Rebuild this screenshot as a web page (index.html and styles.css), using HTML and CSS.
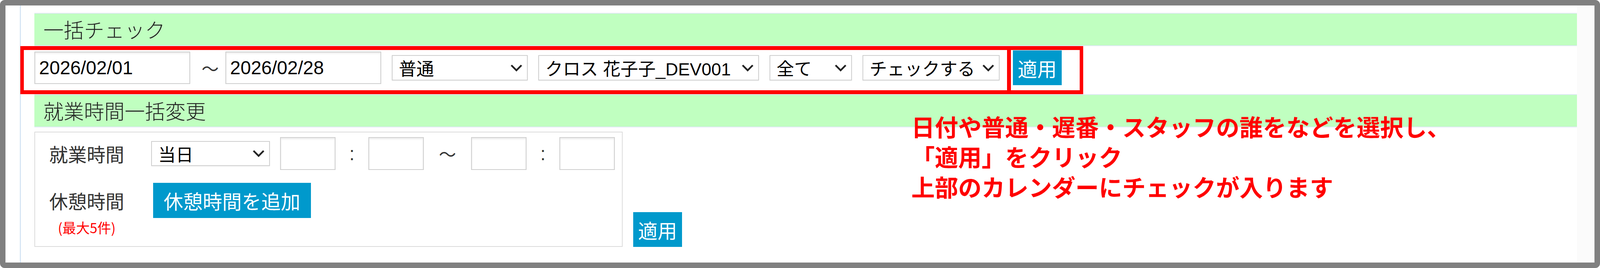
FILE: index.html
```html
<!DOCTYPE html>
<html lang="ja">
<head>
    <meta charset="UTF-8">
    <meta name="viewport" content="width=device-width, initial-scale=1.0">
    <title>一括チェック</title>
    <link rel="stylesheet" href="styles.css">
</head>
<body>
    <div class="frame">
        <div class="page">
            <div class="content">
                <div class="bar">一括チェック</div>
                <div class="check-row">
                    <input type="text" class="date" value="2026/02/01">
                    <span class="tilde">〜</span>
                    <input type="text" class="date" value="2026/02/28">
                    <div class="sel sel-type">
                        <span>普通</span>
                        <svg class="chev" viewBox="0 0 30 18"><polyline points="2,2 15,15 28,2"/></svg>
                    </div>
                    <div class="sel sel-staff">
                        <span>クロス 花子子_DEV001</span>
                        <svg class="chev" viewBox="0 0 30 18"><polyline points="2,2 15,15 28,2"/></svg>
                    </div>
                    <div class="sel sel-all">
                        <span>全て</span>
                        <svg class="chev" viewBox="0 0 30 18"><polyline points="2,2 15,15 28,2"/></svg>
                    </div>
                    <div class="sel sel-check">
                        <span>チェックする</span>
                        <svg class="chev" viewBox="0 0 30 18"><polyline points="2,2 15,15 28,2"/></svg>
                    </div>
                    <button class="btn btn-apply">適用</button>
                    <!-- 注釈の赤枠 -->
                    <span class="mark mark-main"></span>
                    <span class="mark mark-btn"></span>
                </div>
                <div class="bar">就業時間一括変更</div>
                <div class="shift">
                    <div class="shift-box">
                        <div class="shift-line">
                            <div class="label">就業時間</div>
                            <div class="sel sel-day">
                                <span>当日</span>
                                <svg class="chev" viewBox="0 0 30 18"><polyline points="2,2 15,15 28,2"/></svg>
                            </div>
                            <input type="text" class="time first">
                            <span class="colon">:</span>
                            <input type="text" class="time">
                            <span class="tilde wide">〜</span>
                            <input type="text" class="time">
                            <span class="colon">:</span>
                            <input type="text" class="time">
                        </div>
                        <div class="shift-line rest">
                            <div class="label">休憩時間<small class="limit">(最大5件)</small></div>
                            <button class="btn btn-add">休憩時間を追加</button>
                        </div>
                    </div>
                    <button class="btn btn-apply">適用</button>
                </div>
                <p class="note">日付や普通・遅番・スタッフの誰をなどを選択し、<br>「適用」をクリック<br>上部のカレンダーにチェックが入ります</p>
            </div>
        </div>
        <div class="track"></div>
    </div>
</body>
</html>
```

FILE: styles.css
```css
* {
    margin: 0;
    padding: 0;
    box-sizing: border-box;
}

html,
body {
    height: 100%;
    overflow: hidden;
}
body {
    background: #fff;
    color: #222;
    font-family: "Liberation Sans", "Noto Sans CJK JP", sans-serif;
}

.frame {
    display: flex;
    height: 100%;
    border: 14px solid #808080;
    border-radius: 12px;
    overflow: hidden;
}
.page {
    flex: 1;
    padding-left: 37px;
}
.track {
    width: 45px;
    background: #fbfbfb;
    border-right: 1px solid #e6e6e6;
}

.content {
    position: relative;
    height: 100%;
    border-left: 2px solid #c8dcf0;
    padding: 19px 0 0 35px;
}

.bar {
    height: 85px;
    padding-left: 23px;
    background: #c0ffc0;
    border-top: 2px solid #dfe8f6;
    border-bottom: 2px solid #dfe8f6;
    font-family: "Noto Sans CJK JP", sans-serif;
    font-size: 52px;
    font-weight: 300;
    line-height: 79px;
    color: #222;
}

/* 一括チェック */
.check-row {
    position: relative;
    display: flex;
    align-items: center;
    height: 123px;
    padding-bottom: 12px;
}
.date {
    width: 399px;
    height: 83px;
    padding-left: 10px;
    border: 2px solid #cfcfcf;
    box-shadow: inset 0 3px 4px rgba(0, 0, 0, 0.08);
    font-family: "Liberation Sans", sans-serif;
    font-size: 48px;
    color: #000;
    outline: none;
}
.tilde {
    width: 90px;
    padding-left: 12px;
    text-align: center;
    font-family: "Noto Sans CJK JP", sans-serif;
    font-size: 44px;
    color: #333;
}
.tilde.wide {
    width: 121px;
    padding-left: 0;
}

.sel {
    display: flex;
    align-items: center;
    justify-content: space-between;
    height: 65px;
    margin-left: 27px;
    padding: 0 12px 0 16px;
    border: 2px solid #cfcfcf;
    background: #fff;
    box-shadow: 0 1px 2px rgba(0, 0, 0, 0.06);
    font-size: 45px;
    color: #000;
    white-space: nowrap;
}
.sel span {
    margin-right: 8px;
}
.sel .chev {
    flex: none;
    width: 30px;
    height: 18px;
    fill: none;
    stroke: #222;
    stroke-width: 4.5;
}
.sel-type { width: 348px; }
.sel-staff { width: 565px; }
.sel-all { width: 211px; }
.sel-check { width: 351px; }
.sel-day {
    width: 304px;
    height: 64px;
    margin-left: 0;
}

.btn {
    width: 125px;
    height: 89px;
    border: 0;
    background: #0099cc;
    color: #fff;
    font-family: "Noto Sans CJK JP", sans-serif;
    font-size: 50px;
    cursor: pointer;
}
.check-row .btn-apply {
    margin-left: 34px;
}
.shift .btn-apply {
    margin-left: 27px;
}

.mark {
    position: absolute;
    top: 0;
    height: 123px;
    border: 10px solid #f00;
    border-left-width: 9px;
    border-right-width: 9px;
}
.mark-main {
    left: -36px;
    width: 2536px;
}
.mark-btn {
    left: 2490px;
    width: 195px;
}

/* 就業時間一括変更 */
.shift {
    display: flex;
    align-items: flex-end;
    margin-top: 11px;
}
.shift-box {
    width: 1506px;
    padding: 12px 18px 24px 36px;
    border: 2px solid #dcdcdc;
}
.shift-line {
    display: flex;
    align-items: center;
    height: 84px;
}
.shift-line.rest {
    align-items: flex-start;
    height: auto;
    margin-top: 33px;
}
.label {
    width: 192px;
    margin-right: 69px;
    text-align: center;
    font-family: "Noto Sans CJK JP", sans-serif;
    font-size: 48px;
    line-height: 84px;
    color: #333;
}
.rest .label {
    line-height: 90px;
}
.limit {
    display: block;
    font-size: 35px;
    line-height: 48px;
    color: #f00;
}
.time {
    width: 142px;
    height: 84px;
    border: 2px solid #cfcfcf;
    box-shadow: inset 0 3px 4px rgba(0, 0, 0, 0.08);
    outline: none;
}
.time.first {
    margin-left: 26px;
}
.colon {
    width: 84px;
    text-align: center;
    font-size: 48px;
    color: #333;
}
.btn-add {
    width: 404px;
    height: 90px;
    margin-left: 5px;
}

.note {
    position: absolute;
    left: 2280px;
    top: 270px;
    font-family: "Noto Sans CJK JP", sans-serif;
    font-size: 60px;
    font-weight: 700;
    line-height: 77px;
    color: #f00;
    white-space: nowrap;
}
```
